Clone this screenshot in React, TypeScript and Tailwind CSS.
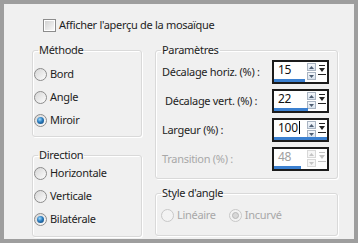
import React from 'react';

type RadioProps = { checked?: boolean; disabled?: boolean };

const Radio: React.FC<RadioProps> = ({ checked, disabled }) => (
  <span
    className={
      disabled
        ? 'flex h-[13px] w-[13px] shrink-0 items-center justify-center rounded-full border border-[#c8c8c8] bg-[#f3f3f3]'
        : 'flex h-[13px] w-[13px] shrink-0 items-center justify-center rounded-full border border-[#8c8c8c] bg-linear-to-br from-[#d6d6d6] to-[#fdfdfd]'
    }
  >
    {checked && (
      <span
        className={
          disabled
            ? 'h-[7px] w-[7px] rounded-full border border-[#b8b8b8] bg-[#d8d8d8]'
            : 'h-[7px] w-[7px] rounded-full bg-[radial-gradient(circle_at_40%_35%,#9fdcff_0%,#2a7bbd_45%,#0f3f6e_100%)]'
        }
      />
    )}
  </span>
);

const RadioRow: React.FC<RadioProps & { label: string }> = ({ label, checked, disabled }) => (
  <div className="flex h-[16px] items-center gap-[3px]">
    <Radio checked={checked} disabled={disabled} />
    <span className={disabled ? 'text-[#a8a8a8]' : ''}>{label}</span>
  </div>
);

const Checkbox = () => (
  <span className="flex h-[13px] w-[13px] shrink-0 items-center justify-center border border-[#8c8c8c] bg-white">
    <span className="h-[9px] w-[9px] bg-linear-to-br from-[#d2d2d2] to-[#f8f8f8]" />
  </span>
);

const Group: React.FC<{ title: string; className: string; children: React.ReactNode }> = ({
  title,
  className,
  children,
}) => (
  <fieldset
    className={`rounded-[3px] border border-[#d9d9d9] shadow-[inset_1px_1px_0_#ffffff,1px_1px_0_#ffffff] ${className}`}
  >
    <legend className="ml-[5px] px-[1px] leading-[14px]">{title}</legend>
    {children}
  </fieldset>
);

const SpinArrows: React.FC<{ disabled?: boolean }> = ({ disabled }) => (
  <div className="mt-[1px] flex w-[9px] flex-col gap-px">
    {[0, 1].map((i) => (
      <div
        key={i}
        className={
          disabled
            ? 'flex h-[8px] items-center justify-center border border-[#d8d8d8] bg-[#f6f6f6]'
            : 'flex h-[8px] items-center justify-center border border-[#a9b4c2] bg-linear-to-b from-[#f4f7fb] to-[#d9e3ee]'
        }
      >
        <svg width="5" height="3" viewBox="0 0 5 3">
          <polygon
            points={i === 0 ? '2.5,0 5,3 0,3' : '0,0 5,0 2.5,3'}
            fill={disabled ? '#c4c4c4' : '#4d5d72'}
          />
        </svg>
      </div>
    ))}
  </div>
);

const DropIcon: React.FC<{ disabled?: boolean }> = ({ disabled }) => (
  <svg width="8" height="11" viewBox="0 0 8 11" className="mt-[3px]">
    <rect x="1" y="0" width="6" height="1" fill={disabled ? '#c4c4c4' : '#222'} />
    <polygon points="1,3 7,3 4,7" fill={disabled ? '#c4c4c4' : '#222'} />
    <rect x="0" y="9" width="8" height="1" fill={disabled ? '#c4c4c4' : '#222'} />
  </svg>
);

type SpinProps = { value: string; bar: number; disabled?: boolean; caret?: boolean };

const SpinBox: React.FC<SpinProps> = ({ value, bar, disabled, caret }) => (
  <div className="flex h-[24px] w-[57px] shrink-0 flex-col border-2 border-[#1b1b1b] bg-white">
    <div className="flex h-[17px] items-start pr-[1px]">
      <span
        className={
          disabled
            ? 'ml-[4px] flex-1 text-[12px] leading-[16px] text-[#a0a0a0]'
            : 'ml-[4px] flex-1 text-[12px] leading-[16px] text-[#111]'
        }
      >
        {value}
        {caret && <span className="ml-px inline-block h-[13px] w-px bg-black align-[-2px]" />}
      </span>
      <SpinArrows disabled={disabled} />
      <div className="ml-[2px] flex w-[8px] justify-center">
        <DropIcon disabled={disabled} />
      </div>
    </div>
    <div className="mt-auto h-[3px]">
      <div className="h-full bg-[#3b80d0]" style={{ width: bar }} />
    </div>
  </div>
);

const ParamRow: React.FC<{ label: string; indent?: boolean } & SpinProps> = ({
  label,
  indent,
  ...spin
}) => (
  <div className="flex h-[24px] items-center justify-between">
    <span className={`${indent ? 'pl-[3px]' : ''} ${spin.disabled ? 'text-[#a8a8a8]' : ''}`}>
      {label}
    </span>
    <SpinBox {...spin} />
  </div>
);

export default function App() {
  return (
    <div className="h-[243px] w-[358px] bg-[#9e9e9e] p-[4px] font-['Noto_Sans',sans-serif] text-[11px] tracking-[-0.3px] text-[#1e1e1e]">
      <div className="flex h-full flex-col bg-[#f0f0f0]">
        <div className="ml-[39px] mt-[15px] flex h-[13px] items-center gap-[3px]">
          <Checkbox />
          <span>Afficher l'aperçu de la mosaïque</span>
        </div>

        <div className="mt-[11px] flex gap-[13px] pl-[28px]">
          <div className="flex w-[110px] flex-col gap-[11px]">
            <Group title="Méthode" className="h-[94px]">
              <div className="flex flex-col gap-[7px] pl-[1px] pt-[9px]">
                <RadioRow label="Bord" />
                <RadioRow label="Angle" />
                <RadioRow label="Miroir" checked />
              </div>
            </Group>
            <Group title="Direction" className="h-[89px]">
              <div className="flex flex-col gap-[7px] pl-[1px] pt-[3px]">
                <RadioRow label="Horizontale" />
                <RadioRow label="Verticale" />
                <RadioRow label="Bilatérale" checked />
              </div>
            </Group>
          </div>

          <div className="flex w-[183px] flex-col gap-[7px]">
            <Group title="Paramètres" className="h-[136px]">
              <div className="flex flex-col gap-[5px] pl-[6px] pr-[8px] pt-[3px]">
                <ParamRow label="Décalage horiz. (%) :" value="15" bar={31} />
                <ParamRow label="Décalage vert. (%) :" value="22" bar={34} indent />
                <ParamRow label="Largeur (%) :" value="100" bar={53} caret />
                <ParamRow label="Transition (%) :" value="48" bar={27} disabled />
              </div>
            </Group>
            <Group title="Style d'angle" className="h-[50px]">
              <div className="flex gap-[13px] pl-[5px] pt-[7px]">
                <RadioRow label="Linéaire" disabled />
                <RadioRow label="Incurvé" checked disabled />
              </div>
            </Group>
          </div>
        </div>
      </div>
    </div>
  );
}
